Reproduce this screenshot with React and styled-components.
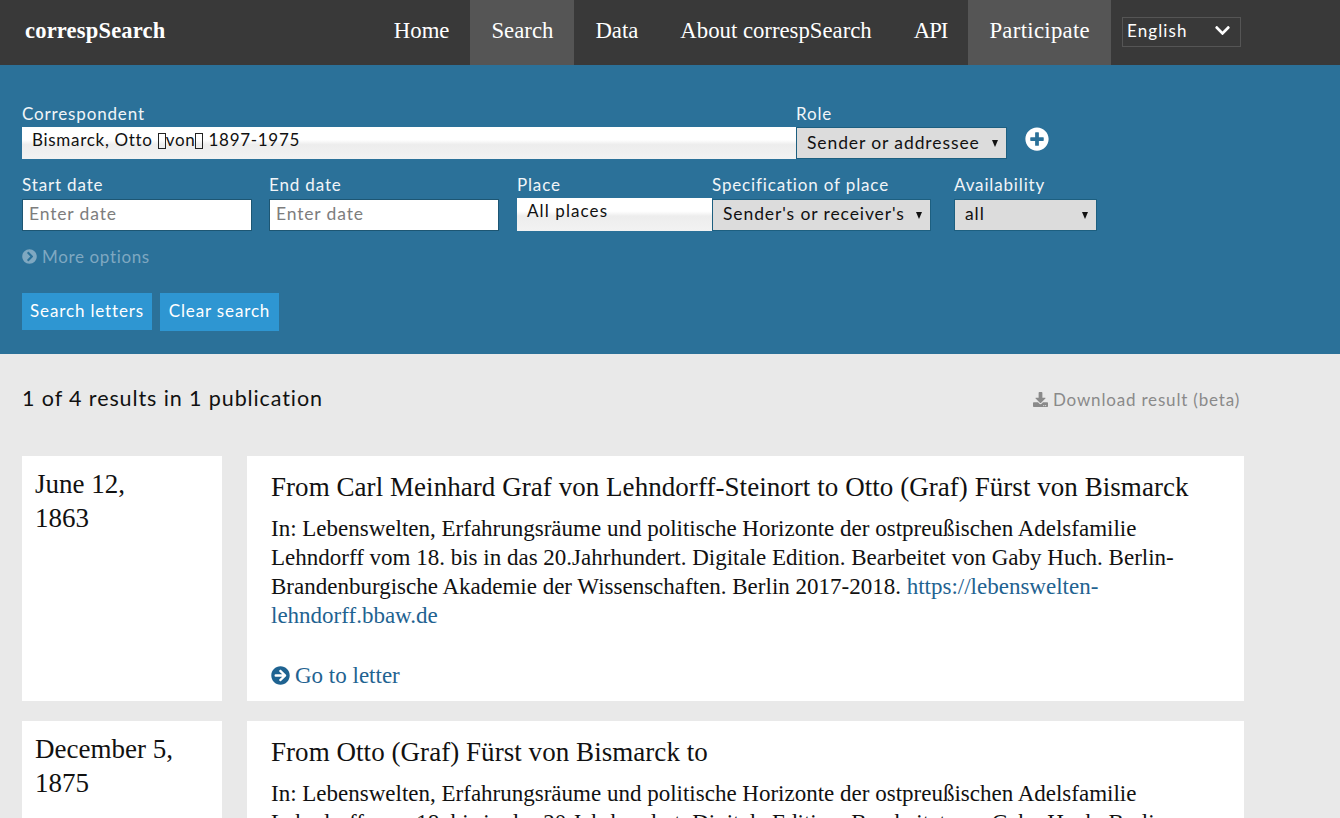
import { createGlobalStyle, styled } from "styled-components";
import {
  FaArrowCircleRight,
  FaChevronCircleRight,
  FaChevronDown,
  FaDownload,
  FaPlusCircle,
} from "react-icons/fa";

const SANS = `"Lato", "Noto Sans", sans-serif`;
const SERIF = `"Liberation Serif", "DejaVu Serif", serif`;

const GlobalStyle = createGlobalStyle`
  html, body {
    margin: 0;
    padding: 0;
    height: 818px;
    overflow: hidden;
    background: #e9e9e9;
  }
  * {
    box-sizing: border-box;
  }
`;

const Header = styled.header`
  height: 65px;
  background: #393939;
  display: flex;
  align-items: stretch;
  padding: 0 99px 0 25px;
`;

const Brand = styled.div`
  font: bold 22.5px ${SERIF};
  color: #fff;
  line-height: 62px;
  letter-spacing: 0.2px;
  margin-right: auto;
`;

const NavItem = styled.a`
  display: block;
  font: 22.75px/62px ${SERIF};
  letter-spacing: ${(p) => p.$spacing || 0}px;
  color: #fff;
  padding: 0 21px;
  background: ${(p) => (p.$active ? "#555555" : "transparent")};
`;

const LangBox = styled.div`
  width: 119px;
  height: 30px;
  margin: 17px 0 0 11px;
  border: 1px solid #555;
  display: flex;
  align-items: center;
  justify-content: space-between;
  padding: 0 9px 3px 4px;
  font: 17px ${SANS};
  letter-spacing: 1.1px;
  color: #fff;
  svg {
    font-size: 17px;
  }
`;

const SearchPanel = styled.section`
  height: 289px;
  background: #2b7199;
  padding: 40px 22px 0;
`;

const Row = styled.div`
  display: flex;
  align-items: flex-start;
  height: 58px;
`;

const Field = styled.div`
  width: ${(p) => p.$width}px;
  margin-right: ${(p) => p.$gap || 0}px;
  flex: none;
`;

const Label = styled.label`
  display: block;
  font: 17px/18px ${SANS};
  letter-spacing: 0.85px;
  color: #f1f5f8;
  height: 22px;
`;

const Typeahead = styled.div`
  height: ${(p) => p.$height}px;
  margin-top: ${(p) => p.$top || 0}px;
  background: linear-gradient(#fff 0, #fff 40%, #ededed 55%, #f2f2f2 100%);
  font: 17px/26px ${SANS};
  letter-spacing: ${(p) => p.$spacing}px;
  color: #111;
  padding: 0 ${(p) => p.$pad}px;
`;

const Tofu = styled.span`
  display: inline-block;
  width: 8px;
  height: 16px;
  border: 1px solid #222;
  vertical-align: -3px;
`;

const DateInput = styled.input`
  display: block;
  width: 100%;
  height: 32px;
  border: 1px solid #1d5673;
  background: #fff;
  padding: 0 6px 3px;
  font: 17.5px ${SANS};
  letter-spacing: 0.85px;
  outline: none;
  &::placeholder {
    color: #7d7d7d;
    opacity: 1;
  }
`;

const SelectBox = styled.div`
  position: relative;
  &::after {
    content: "";
    position: absolute;
    right: 9px;
    top: 13px;
    border-left: 3.5px solid transparent;
    border-right: 3.5px solid transparent;
    border-top: 7px solid #111;
    pointer-events: none;
  }
`;

const Select = styled.select`
  display: block;
  width: 100%;
  height: 32px;
  appearance: none;
  background: #dcdcdc;
  border: 1px solid #1d5f80;
  border-radius: 0;
  padding: 0 0 2px 10px;
  font: 17.5px ${SANS};
  letter-spacing: 0.9px;
  color: #111;
  outline: none;
`;

const SecondRow = styled(Row)`
  margin-top: 13px;
  ${Label} {
    height: 23px;
  }
  ${Select} {
    padding-bottom: 4px;
  }
`;

const AddButton = styled.span`
  margin: 22px 0 0 18px;
  color: #fff;
  font-size: 24px;
  line-height: 0;
`;

const MoreOptions = styled.div`
  display: flex;
  align-items: center;
  gap: 5px;
  margin-top: 12px;
  height: 22px;
  padding-bottom: 2px;
  font: 17px ${SANS};
  letter-spacing: 0.65px;
  color: #7fa8c1;
  svg {
    font-size: 15px;
  }
`;

const Actions = styled.div`
  display: flex;
  gap: 8px;
  margin-top: 25px;
`;

const Button = styled.button`
  height: ${(p) => p.$height}px;
  width: ${(p) => p.$width}px;
  border: 0;
  padding: 0 0 3px;
  background: #2e96d2;
  color: #fff;
  font: 17px ${SANS};
  letter-spacing: 0.85px;
`;

const Results = styled.main`
  padding: 0 22px;
`;

const ResultsHeader = styled.div`
  height: 102px;
  width: 1218px;
  display: flex;
  justify-content: space-between;
  align-items: flex-start;
  padding-top: 31px;
`;

const ResultCount = styled.div`
  font: 21.5px/27px ${SANS};
  letter-spacing: 0.9px;
  color: #111;
`;

const Download = styled.a`
  display: flex;
  align-items: center;
  gap: 5px;
  font: 17px/29px ${SANS};
  letter-spacing: 0.82px;
  color: #8a8a8a;
  svg {
    font-size: 15px;
  }
`;

const ResultRow = styled.article`
  display: grid;
  grid-template-columns: 200px 997px;
  gap: 25px;
  margin-bottom: 20px;
`;

const DateCard = styled.div`
  background: #fff;
  padding: 11px 13px;
  font: 27px/34px ${SERIF};
  color: #111;
`;

const LetterCard = styled.div`
  background: #fff;
  padding: 14px 24px 11px;
  min-height: 245px;
`;

const Title = styled.h2`
  margin: 0 0 10px;
  font: normal 27px/34px ${SERIF};
  letter-spacing: 0.05px;
  color: #111;
`;

const Citation = styled.p`
  margin: 0 0 31px;
  font: 23px/29px ${SERIF};
  color: #111;
`;

const TextLink = styled.a`
  color: #1f6391;
`;

const GoToLetter = styled.a`
  display: flex;
  align-items: center;
  gap: 5px;
  font: 23px/29px ${SERIF};
  color: #1f6391;
  svg {
    font-size: 19px;
  }
`;

const NAV = [
  { label: "Home" },
  { label: "Search", active: true },
  { label: "Data" },
  { label: "About correspSearch" },
  { label: "API", spacing: -1 },
  { label: "Participate", active: true, spacing: 0.3 },
];

const RESULTS = [
  {
    date: ["June 12,", "1863"],
    title:
      "From Carl Meinhard Graf von Lehndorff-Steinort to Otto (Graf) Fürst von Bismarck",
  },
  {
    date: ["December 5,", "1875"],
    title: "From Otto (Graf) Fürst von Bismarck to",
  },
];

export default function App() {
  return (
    <>
      <GlobalStyle />
      <Header>
        <Brand>correspSearch</Brand>
        {NAV.map((item) => (
          <NavItem key={item.label} $active={item.active} $spacing={item.spacing}>
            {item.label}
          </NavItem>
        ))}
        <LangBox>
          English
          <FaChevronDown />
        </LangBox>
      </Header>

      <SearchPanel>
        <Row>
          <Field $width={774}>
            <Label>Correspondent</Label>
            <Typeahead $height={32} $pad={10} $spacing={0.7}>
              Bismarck, Otto <Tofu />
              von
              <Tofu /> 1897-1975
            </Typeahead>
          </Field>
          <Field $width={211}>
            <Label>Role</Label>
            <SelectBox>
              <Select>
                <option>Sender or addressee</option>
              </Select>
            </SelectBox>
          </Field>
          <AddButton>
            <FaPlusCircle />
          </AddButton>
        </Row>

        <SecondRow>
          <Field $width={230} $gap={17}>
            <Label>Start date</Label>
            <DateInput placeholder="Enter date" />
          </Field>
          <Field $width={230} $gap={18}>
            <Label>End date</Label>
            <DateInput placeholder="Enter date" />
          </Field>
          <Field $width={195}>
            <Label>Place</Label>
            <Typeahead $height={33} $pad={10} $top={-1} $spacing={1.1}>
              All places
            </Typeahead>
          </Field>
          <Field $width={219} $gap={23}>
            <Label>Specification of place</Label>
            <SelectBox>
              <Select>
                <option>Sender's or receiver's</option>
              </Select>
            </SelectBox>
          </Field>
          <Field $width={143}>
            <Label>Availability</Label>
            <SelectBox>
              <Select>
                <option>all</option>
              </Select>
            </SelectBox>
          </Field>
        </SecondRow>

        <MoreOptions>
          <FaChevronCircleRight />
          More options
        </MoreOptions>

        <Actions>
          <Button $width={130} $height={37}>
            Search letters
          </Button>
          <Button $width={119} $height={38}>
            Clear search
          </Button>
        </Actions>
      </SearchPanel>

      <Results>
        <ResultsHeader>
          <ResultCount>1 of 4 results in 1 publication</ResultCount>
          <Download>
            <FaDownload />
            Download result (beta)
          </Download>
        </ResultsHeader>

        {RESULTS.map((result) => (
          <ResultRow key={result.title}>
            <DateCard>
              {result.date[0]}
              <br />
              {result.date[1]}
            </DateCard>
            <LetterCard>
              <Title>{result.title}</Title>
              <Citation>
                In: Lebenswelten, Erfahrungsräume und politische Horizonte der
                ostpreußischen Adelsfamilie Lehndorff vom 18. bis in das
                20.Jahrhundert. Digitale Edition. Bearbeitet von Gaby Huch.
                Berlin-Brandenburgische Akademie der Wissenschaften. Berlin
                2017-2018.{" "}
                <TextLink>https://lebenswelten-lehndorff.bbaw.de</TextLink>
              </Citation>
              <GoToLetter>
                <FaArrowCircleRight />
                Go to letter
              </GoToLetter>
            </LetterCard>
          </ResultRow>
        ))}
      </Results>
    </>
  );
}
